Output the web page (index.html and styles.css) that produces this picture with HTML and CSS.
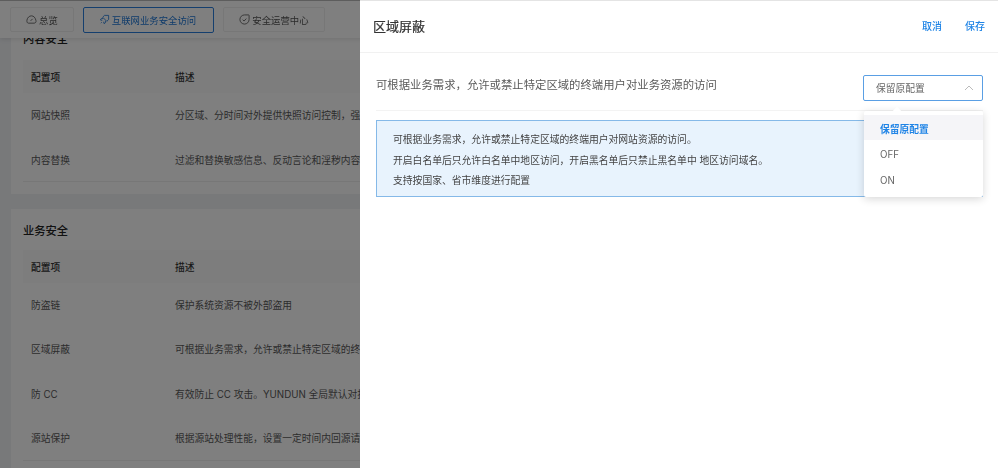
FILE: index.html
```html
<!DOCTYPE html>
<html lang="zh-CN">
<head>
<meta charset="utf-8">
<title>区域屏蔽</title>
<link rel="stylesheet" href="styles.css">
</head>
<body>
<div class="page">
  <nav class="tabs">
    <a class="tab tab-a">
      <svg class="ic" viewBox="0 0 12 12"><path d="M2.600 10h6.300a2.100 2.100 0 0 0 2-2.700C10.300 4 8.300 2 6 2 3.500 2 1.500 4 1 6.800 .8 8.600 1.400 10 2.600 10zM5 7.500 7.200 5.300"/></svg>总览</a>
    <a class="tab tab-b active">
      <svg class="ic" viewBox="0 0 12 12"><path d="M4 3.500 6 1.500h4.500V6L8.500 8 4 3.500zM4.500 5H2.500L1.500 6.500l2 .5M7 7.500v2L5.500 10.500 5 8.500M3 9l-1 1"/></svg>互联网业务安全访问</a>
    <a class="tab tab-c">
      <svg class="ic" viewBox="0 0 12 12"><path d="M6 1h4.500a.5.5 0 0 1 .5.500V6A5 5 0 1 1 6 1zM4 6.200l1.500 1.500L8 5"/></svg>安全运营中心</a>
  </nav>
  <main class="content">
    <section class="card first">
      <h2 class="card-title">内容安全</h2>
      <div class="row head"><span class="c1">配置项</span><span class="c2">描述</span></div>
      <div class="row"><span class="c1">网站快照</span><span class="c2">分区域、分时间对外提供快照访问控制，强</span></div>
      <div class="row"><span class="c1">内容替换</span><span class="c2">过滤和替换敏感信息、反动言论和淫秽内容</span></div>
    </section>
    <section class="card second">
      <h2 class="card-title">业务安全</h2>
      <div class="row head"><span class="c1">配置项</span><span class="c2">描述</span></div>
      <div class="row"><span class="c1">防盗链</span><span class="c2">保护系统资源不被外部盗用</span></div>
      <div class="row"><span class="c1">区域屏蔽</span><span class="c2">可根据业务需求，允许或禁止特定区域的终</span></div>
      <div class="row"><span class="c1">防 CC</span><span class="c2">有效防止 CC 攻击。YUNDUN 全局默认对抗</span></div>
      <div class="row"><span class="c1">源站保护</span><span class="c2">根据源站处理性能，设置一定时间内回源请</span></div>
    </section>
  </main>
</div>
<div class="mask"></div>
<aside class="drawer">
  <header class="drawer-head">
    <h1 class="drawer-title">区域屏蔽</h1>
    <div class="actions"><a class="link">取消</a><a class="link">保存</a></div>
  </header>
  <div class="drawer-body">
    <div class="setting">
      <p class="setting-text">可根据业务需求，允许或禁止特定区域的终端用户对业务资源的访问</p>
      <div class="select">
        <span>保留原配置</span>
        <svg class="chev" viewBox="0 0 10 6"><path d="M1 5l4-4 4 4"/></svg>
        <div class="menu">
          <i class="menu-arrow"></i>
          <div class="opt selected">保留原配置</div>
          <div class="opt">OFF</div>
          <div class="opt">ON</div>
        </div>
      </div>
    </div>
    <div class="alert">
      <p>可根据业务需求，允许或禁止特定区域的终端用户对网站资源的访问。</p>
      <p>开启白名单后只允许白名单中地区访问，开启黑名单后只禁止黑名单中 地区访问域名。</p>
      <p>支持按国家、省市维度进行配置</p>
    </div>
  </div>
</aside>
</body>
</html>
```
FILE: styles.css
```css
* { box-sizing: border-box; }
html, body { margin: 0; height: 100%; }
body {
  width: 998px; height: 468px; overflow: hidden; position: relative;
  font-family: Inter, "Noto Sans CJK SC", sans-serif;
  font-size: 9.75px; color: #333; background: #f0f2f5;
}
.page { height: 468px; overflow: hidden; position: relative; filter: blur(.5px); }
.tabs {
  position: absolute; top: 0; left: 0; right: 0; height: 38px; z-index: 2;
  display: flex; align-items: center; gap: 9px; padding: 0 0 0 10px;
  background: #fff; border-top: 1px solid #bbb; box-shadow: 0 1px 5px rgba(0,0,0,.12);
  font-size: 9.4px;
}
.tab {
  display: flex; align-items: center; justify-content: center; gap: 2px;
  height: 25px; border: 1px solid #eee; border-radius: 2px; color: #555;
}
.tab-a { width: 64px; }
.tab-b { width: 131px; height: 26px; padding-right: 2px; }
.tab-c { width: 102px; }
.active { color: #1d76d6; border-color: #2a7fdd; }
.ic { width: 11px; height: 11px; fill: none; stroke: currentColor; stroke-width: .9; }
.content { padding: 27px 0 0 11px; display: flex; flex-direction: column; gap: 15px; }
.card { background: #fff; padding: 0 12px; width: 1000px; }
.first { height: 167px; }
.second { height: 300px; }
.card-title { margin: 0; font-size: 11.25px; line-height: 16px; font-weight: 500; color: #222; }
.first .card-title { padding-top: 4px; height: 33px; }
.second .card-title { padding-top: 14px; height: 41px; }
.row { display: flex; align-items: center; height: 44.5px; padding-left: 8px; border-bottom: 1px solid #fff; color: #595959; white-space: nowrap; }
.row:last-child { border-bottom-color: #eee; }
.first .row:last-child { padding-top: 1px; }
.row.head { height: 33px; background: #fafafa; color: #333; font-weight: 500; border: 0; }
.c1 { width: 144px; flex: none; }
.mask { position: absolute; inset: 0; background: rgba(0,0,0,.5); z-index: 5; }
.drawer {
  position: absolute; z-index: 6; top: 0; right: 0; bottom: 0; width: 638px;
  background: #fff; display: flex; flex-direction: column;
  border-top: 1px solid #e4e4e4; filter: blur(.3px);
}
.drawer-head {
  height: 52px; flex: none; display: flex; align-items: center; justify-content: space-between;
  padding: 0 13px 2px; border-bottom: 1px solid #f1f1f1;
}
.drawer-title { margin: 0; font-size: 13px; line-height: 18px; font-weight: 400; color: #333; -webkit-text-stroke: .2px #333; }
.actions { display: flex; gap: 23px; }
.link { color: #1f84e6; font-size: 10px; font-weight: 500; line-height: 14px; }
.drawer-body { padding: 0 15px 0 16px; }
.setting {
  display: flex; align-items: center; justify-content: space-between;
  height: 58px; padding-top: 6px; border-bottom: 1px solid #f3f3f3; position: relative;
}
.setting-text { margin: 0; font-size: 11.37px; line-height: 16px; color: #595959; }
.select {
  position: relative; width: 120px; height: 26px; flex: none; margin-top: 6px;
  display: flex; align-items: center; justify-content: space-between; padding: 0 8px 0 12px;
  border: 1px solid #5a9fe4; border-radius: 2px; color: #666; background: #fff;
}
.chev { width: 10px; height: 6px; fill: none; stroke: #bbb; stroke-width: 1; }
.menu {
  position: absolute; z-index: 2; top: 35px; left: 0; width: 119px; height: 86px; padding-top: 4px;
  background: #fff; border-radius: 2px; box-shadow: 0 2px 8px rgba(0,0,0,.16);
}
.menu-arrow {
  position: absolute; top: -3px; left: 30px; width: 6px; height: 6px;
  background: #fff; transform: rotate(45deg);
}
.opt { height: 25.5px; line-height: 25.5px; padding: 2px 0 0 16px; color: #666; }
.opt.selected { background: #f5f5f8; color: #1f84e6; font-weight: 600; }
.alert {
  margin-top: 9px; height: 77px; padding: 8px 15px 8px 16px; background: #e8f3fd;
  border: 1px solid #85b9e8; color: #444; font-size: 9.8px;
}
.alert p { margin: 0; line-height: 20.5px; padding-top: 1px; height: 20.5px; white-space: nowrap; }
```
